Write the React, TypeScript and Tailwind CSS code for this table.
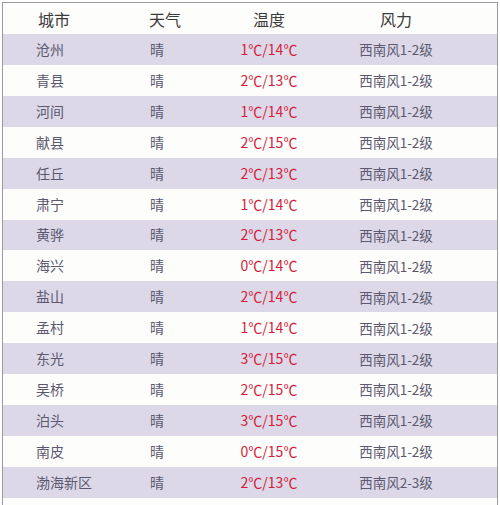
import React from "react";

type Row = { city: string; weather: string; temp: string; wind: string };

const rows: Row[] = [
    { city: "沧州", weather: "晴", temp: "1℃/14℃", wind: "西南风1-2级" },
    { city: "青县", weather: "晴", temp: "2℃/13℃", wind: "西南风1-2级" },
    { city: "河间", weather: "晴", temp: "1℃/14℃", wind: "西南风1-2级" },
    { city: "献县", weather: "晴", temp: "2℃/15℃", wind: "西南风1-2级" },
    { city: "任丘", weather: "晴", temp: "2℃/13℃", wind: "西南风1-2级" },
    { city: "肃宁", weather: "晴", temp: "1℃/14℃", wind: "西南风1-2级" },
    { city: "黄骅", weather: "晴", temp: "2℃/13℃", wind: "西南风1-2级" },
    { city: "海兴", weather: "晴", temp: "0℃/14℃", wind: "西南风1-2级" },
    { city: "盐山", weather: "晴", temp: "2℃/14℃", wind: "西南风1-2级" },
    { city: "孟村", weather: "晴", temp: "1℃/14℃", wind: "西南风1-2级" },
    { city: "东光", weather: "晴", temp: "3℃/15℃", wind: "西南风1-2级" },
    { city: "吴桥", weather: "晴", temp: "2℃/15℃", wind: "西南风1-2级" },
    { city: "泊头", weather: "晴", temp: "3℃/15℃", wind: "西南风1-2级" },
    { city: "南皮", weather: "晴", temp: "0℃/15℃", wind: "西南风1-2级" },
    { city: "渤海新区", weather: "晴", temp: "2℃/13℃", wind: "西南风2-3级" },
];

const cols = "grid grid-cols-[146px_70px_100px_154px_1fr] items-center";

export default function App() {
    return (
        <div className="w-[500px] h-[505px] bg-white overflow-hidden pt-[2px] px-[2px]"
             style={{ fontFamily: '"Noto Sans CJK SC", "Noto Sans", sans-serif' }}>
            <div className="border-t-[1.5px] border-x-[1.5px] border-[#9a9a9e] h-[520px] bg-[#fdfdfb]">
                {/* header */}
                <div className={`${cols} h-[31px] text-[16px] text-[#3b3b3b]`}>
                    <div className="pl-[35px]">城市</div>
                    <div>天气</div>
                    <div className="text-center">温度</div>
                    <div className="text-center">风力</div>
                    <div></div>
                </div>

                {rows.map((row, i) => (
                    <div key={row.city}
                         className={`${cols} h-[30.93px] text-[14px] text-[#5b5870] ${i % 2 === 0 ? "bg-[#dcd8e8]" : "bg-[#fdfdfb]"}`}>
                        <div className="pl-[33px]">{row.city}</div>
                        <div className="pl-[1px]">{row.weather}</div>
                        <div className="text-center text-[#d41c3a]">{row.temp}</div>
                        <div className="text-center text-[13.5px]">{row.wind}</div>
                        <div></div>
                    </div>
                ))}
            </div>
        </div>
    );
}
